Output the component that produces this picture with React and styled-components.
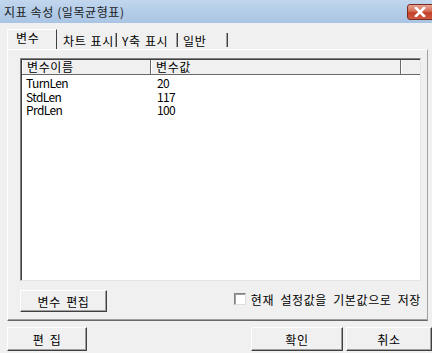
import React from "react";
import styled, { createGlobalStyle } from "styled-components";

const GlobalStyle = createGlobalStyle`
  html, body {
    margin: 0;
    padding: 0;
    background: #f0f0f0;
  }
  * { box-sizing: border-box; }
`;

const variables = [
  { id: 1, name: "TurnLen", value: "20" },
  { id: 2, name: "StdLen", value: "117" },
  { id: 3, name: "PrdLen", value: "100" },
];

const tabs = [
  { id: "var", label: "변수", width: 50, pad: 8 },
  { id: "chart", label: "차트 표시", width: 60, pad: 6 },
  { id: "yaxis", label: "Y축 표시", width: 61, pad: 5 },
  { id: "general", label: "일반", width: 50, pad: 5 },
];

const App = () => {
  return (
    <Window>
      <GlobalStyle />
      <TitleBar>
        <Title>지표 속성 (일목균형표)</Title>
        <CloseButton>
          <svg width="14" height="10" viewBox="0 0 14 10">
            <path d="M3 1 L11 9 M11 1 L3 9" stroke="#ffffff" strokeWidth="2.6" strokeLinecap="square" />
          </svg>
        </CloseButton>
      </TitleBar>

      <TabStrip>
        {tabs.map((tab, i) => (
          <Tab key={tab.id} active={i === 0} $w={tab.width} $pad={tab.pad}>
            {tab.label}
          </Tab>
        ))}
      </TabStrip>

      <Panel>
        <ListBox>
          <HeaderRow>
            <HeaderCell $w={129}>변수이름</HeaderCell>
            <HeaderCell $w={250}>변수값</HeaderCell>
            <HeaderCell $w={18} />
          </HeaderRow>
          {variables.map((item) => (
            <Row key={item.id}>
              <Cell $w={129}>{item.name}</Cell>
              <Cell $w={250}>{item.value}</Cell>
            </Row>
          ))}
        </ListBox>
        <PanelFooter>
          <Button $w={87} $h={22}>변수 편집</Button>
          <CheckLabel>
            <CheckBox />
            현재 설정값을 기본값으로 저장
          </CheckLabel>
        </PanelFooter>
      </Panel>

      <DialogButtons>
        <Button $w={80} $h={24}>편 집</Button>
        <RightButtons>
          <Button $w={92} $h={24}>확인</Button>
          <Button $w={86} $h={24}>취소</Button>
        </RightButtons>
      </DialogButtons>
    </Window>
  );
};

const Window = styled.div`
  width: 432px;
  height: 353px;
  overflow: hidden;
  background: #f0f0f0;
  font-family: "Noto Sans CJK KR", "Liberation Sans", sans-serif;
  font-size: 12px;
  letter-spacing: 0.6px;
  color: #000;
  display: flex;
  flex-direction: column;
`;

const TitleBar = styled.div`
  height: 23px;
  flex: none;
  display: flex;
  align-items: flex-start;
  justify-content: space-between;
  background: linear-gradient(to bottom, #c2d7ee 0%, #b3cce8 50%, #aac5e4 100%);
`;

const Title = styled.div`
  padding: 4px 0 0 4px;
  font-size: 12px;
  line-height: 15px;
  color: #1a1a1a;
`;

const CloseButton = styled.div`
  margin-top: 4px;
  margin-right: -20px;
  width: 45px;
  height: 16px;
  border: 1px solid #7a2b22;
  border-radius: 3px;
  background: linear-gradient(to bottom, #e9a594 0%, #d56c55 45%, #c4402a 55%, #d05a40 100%);
  display: flex;
  align-items: center;
  padding-left: 5px;
`;

const TabStrip = styled.div`
  margin: 6px 0 0 7px;
  height: 20px;
  flex: none;
  display: flex;
  align-items: flex-end;
`;

const Tab = styled.div`
  position: relative;
  width: ${(p) => p.$w}px;
  height: ${(p) => (p.active ? 20 : 18)}px;
  padding-left: ${(p) => p.$pad}px;
  line-height: ${(p) => (p.active ? 16 : 20)}px;
  white-space: nowrap;
  word-spacing: 1px;
  border-top: ${(p) => (p.active ? "1px solid #ffffff" : "none")};
  border-left: ${(p) => (p.active ? "1px solid #ffffff" : "none")};
  border-right: 1px solid #404040;
  background: #f0f0f0;
  ${(p) =>
    !p.active &&
    `
    border-right: none;
    &::after {
      content: "";
      position: absolute;
      right: 0;
      top: 2px;
      bottom: 2px;
      width: 1px;
      background: #404040;
      box-shadow: -1px 0 0 #a0a0a0;
    }
  `}
`;

const Panel = styled.div`
  margin-left: 7px;
  width: 421px;
  height: 272px;
  flex: none;
  border-top: 1px solid #ffffff;
  border-left: 1px solid #ffffff;
  border-right: 1px solid #a0a0a0;
  border-bottom: 1px solid #696969;
  box-shadow: inset 0 -1px 0 #a0a0a0;
  padding: 8px 5px 0 12px;
  display: flex;
  flex-direction: column;
`;

const ListBox = styled.div`
  width: 401px;
  height: 223px;
  background: #ffffff;
  border-top: 1px solid #808080;
  border-left: 1px solid #808080;
  border-right: 1px solid #e3e3e3;
  border-bottom: 1px solid #e3e3e3;
  box-shadow: inset 1px 1px 0 #404040;
  padding: 1px 0 0 1px;
`;

const HeaderRow = styled.div`
  display: flex;
  height: 15px;
  background: #f0f0f0;
  border-bottom: 1px solid #696969;
  margin-bottom: 1px;
`;

const HeaderCell = styled.div`
  width: ${(p) => p.$w}px;
  flex: none;
  padding-left: 5px;
  line-height: 14px;
  border-right: 1px solid #696969;
  box-shadow: inset 1px 0 0 #ffffff;
  &:last-child {
    border-right: none;
  }
`;

const Row = styled.div`
  display: flex;
  height: 13.5px;
  line-height: 13px;
`;

const Cell = styled.div`
  width: ${(p) => p.$w}px;
  flex: none;
  padding-left: 4px;
  letter-spacing: -0.6px;
  &:nth-child(2) {
    padding-left: 6px;
  }
`;

const PanelFooter = styled.div`
  margin-top: 9px;
  display: flex;
  align-items: center;
  justify-content: space-between;
  padding-right: 1px;
`;

const Button = styled.div`
  width: ${(p) => p.$w}px;
  height: ${(p) => p.$h}px;
  flex: none;
  display: flex;
  align-items: center;
  justify-content: center;
  background: #f0f0f0;
  border-top: 1px solid #ffffff;
  border-left: 1px solid #ffffff;
  border-right: 1px solid #404040;
  border-bottom: 1px solid #404040;
  box-shadow: inset -1px -1px 0 #a0a0a0;
  word-spacing: 2px;
`;

const CheckLabel = styled.label`
  display: flex;
  align-items: center;
  gap: 5px;
  margin-top: -4px;
  word-spacing: 3px;
`;

const CheckBox = styled.span`
  width: 12px;
  height: 12px;
  background: #ffffff;
  border-top: 1px solid #808080;
  border-left: 1px solid #808080;
  border-right: 1px solid #dcdcdc;
  border-bottom: 1px solid #dcdcdc;
  box-shadow: inset 1px 1px 0 #a0a0a0;
`;

const DialogButtons = styled.div`
  margin: 6px 0 0 7px;
  display: flex;
  justify-content: space-between;
`;

const RightButtons = styled.div`
  display: flex;
  gap: 3px;
`;

export default App;
